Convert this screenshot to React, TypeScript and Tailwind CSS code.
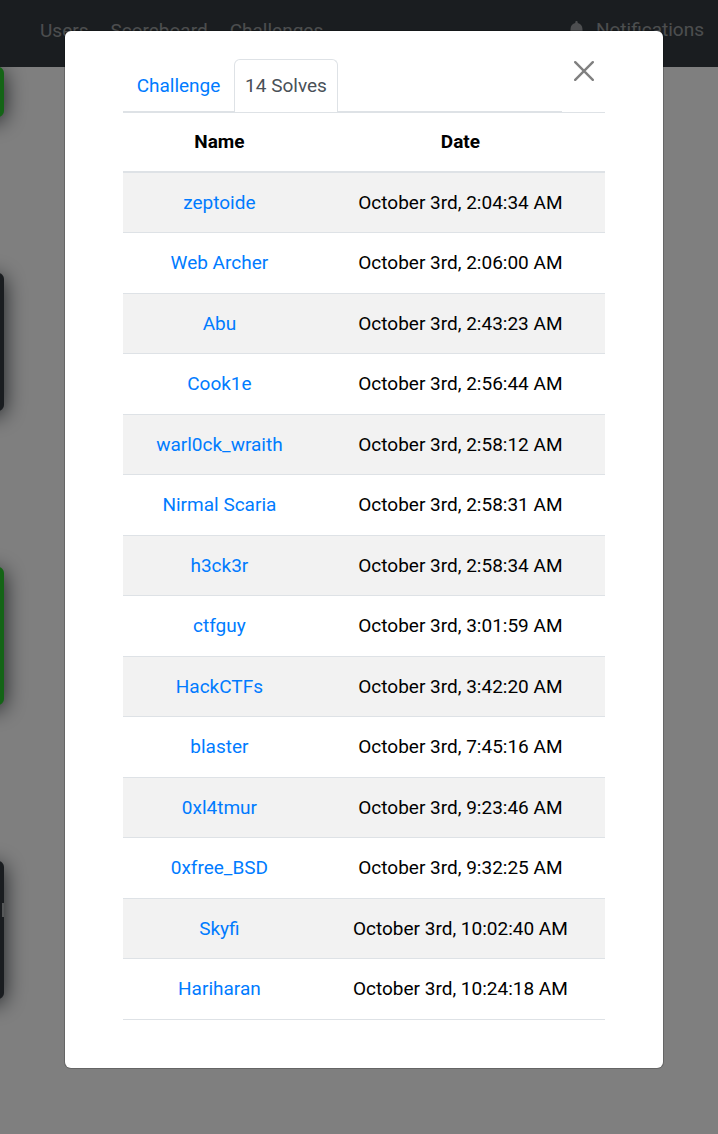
import React from "react";
import { FaBell } from "react-icons/fa";

const solves: [string, string][] = [
  ["zeptoide", "October 3rd, 2:04:34 AM"],
  ["Web Archer", "October 3rd, 2:06:00 AM"],
  ["Abu", "October 3rd, 2:43:23 AM"],
  ["Cook1e", "October 3rd, 2:56:44 AM"],
  ["warl0ck_wraith", "October 3rd, 2:58:12 AM"],
  ["Nirmal Scaria", "October 3rd, 2:58:31 AM"],
  ["h3ck3r", "October 3rd, 2:58:34 AM"],
  ["ctfguy", "October 3rd, 3:01:59 AM"],
  ["HackCTFs", "October 3rd, 3:42:20 AM"],
  ["blaster", "October 3rd, 7:45:16 AM"],
  ["0xl4tmur", "October 3rd, 9:23:46 AM"],
  ["0xfree_BSD", "October 3rd, 9:32:25 AM"],
  ["Skyfi", "October 3rd, 10:02:40 AM"],
  ["Hariharan", "October 3rd, 10:24:18 AM"],
];

function Navbar() {
  return (
    <header className="relative z-10 flex h-[67px] items-start justify-between bg-[#343a40] pl-10 pr-3.5 pt-4 text-white/50">
      <nav className="flex gap-[22px] pt-px">
        <a href="#users">Users</a>
        <a href="#scoreboard">Scoreboard</a>
        <a href="#challenges">Challenges</a>
      </nav>
      <a href="#notifications" className="flex items-center gap-2.5">
        <FaBell size={19} aria-hidden="true" />
        Notifications
      </a>
    </header>
  );
}

function Board() {
  const card = "-ml-[252px] w-64 rounded-md shadow-[0_4px_22px_#343a40]";
  return (
    <main className="flex flex-col gap-[156px]">
      <div className={`h-[50px] bg-[#28c82d] ${card}`} />
      <div className={`h-[138px] bg-[#343a40] ${card}`} />
      <div className={`h-[138px] bg-[#28c82d] ${card}`} />
      <div className={`flex h-[138px] justify-end bg-[#343a40] pt-[42px] ${card}`}>
        <div className="h-3.5 w-0.5 bg-white/60" />
      </div>
    </main>
  );
}

function SolvesTable() {
  return (
    <table className="w-full table-fixed border-separate border-spacing-0 border-t border-[#dee2e6] text-center">
      <colgroup>
        <col className="w-[40%]" />
        <col />
      </colgroup>
      <thead>
        <tr className="h-[60px]">
          <th className="border-b-2 border-[#dee2e6] font-bold">Name</th>
          <th className="border-b-2 border-[#dee2e6] font-bold">Date</th>
        </tr>
      </thead>
      <tbody>
        {solves.map(([name, date]) => (
          <tr key={name} className="odd:h-[60px] odd:bg-[#f2f2f2] even:h-[61px]">
            <td className="border-b border-[#dee2e6]">
              <a href="#user" className="text-[#007bff]">
                {name}
              </a>
            </td>
            <td className="border-b border-[#dee2e6]">{date}</td>
          </tr>
        ))}
      </tbody>
    </table>
  );
}

function SolvesDialog() {
  return (
    <section
      role="dialog"
      aria-label="Challenge solves"
      className="rounded-md bg-white px-[58px] pb-12 pt-7 text-black shadow-[0_0_0_1px_rgba(0,0,0,0.2)]"
    >
      <div className="flex">
        <div role="tablist" className="flex h-[53px] flex-1 border-b border-[#dee2e6]">
          <button role="tab" aria-selected="false" className="w-[111px] pt-0.5 text-[#007bff]">
            Challenge
          </button>
          <button
            role="tab"
            aria-selected="true"
            className="-mb-px w-[104px] rounded-t-md border border-b-0 border-[#dee2e6] bg-white text-[#495057]"
          >
            14 Solves
          </button>
        </div>
        <button aria-label="Close" className="flex w-[43px] items-start justify-center pt-0.5">
          <svg width="20" height="20" viewBox="0 0 20 20" fill="none" stroke="#808080" strokeWidth="2.4" strokeLinecap="round" aria-hidden="true">
            <path d="M1.2 1.2 18.8 18.8M18.8 1.2 1.2 18.8" />
          </svg>
        </button>
      </div>
      <SolvesTable />
    </section>
  );
}

export default function App() {
  return (
    <div className="grid min-h-screen overflow-x-hidden bg-white font-[Roboto,'Liberation_Sans',sans-serif] text-[19px] leading-7">
      <div className="min-w-0 [grid-area:1/1]">
        <Navbar />
        <Board />
      </div>
      <div className="z-20 bg-black/50 pb-16 pl-[65px] pr-[55px] pt-[31px] [grid-area:1/1]">
        <SolvesDialog />
      </div>
    </div>
  );
}
